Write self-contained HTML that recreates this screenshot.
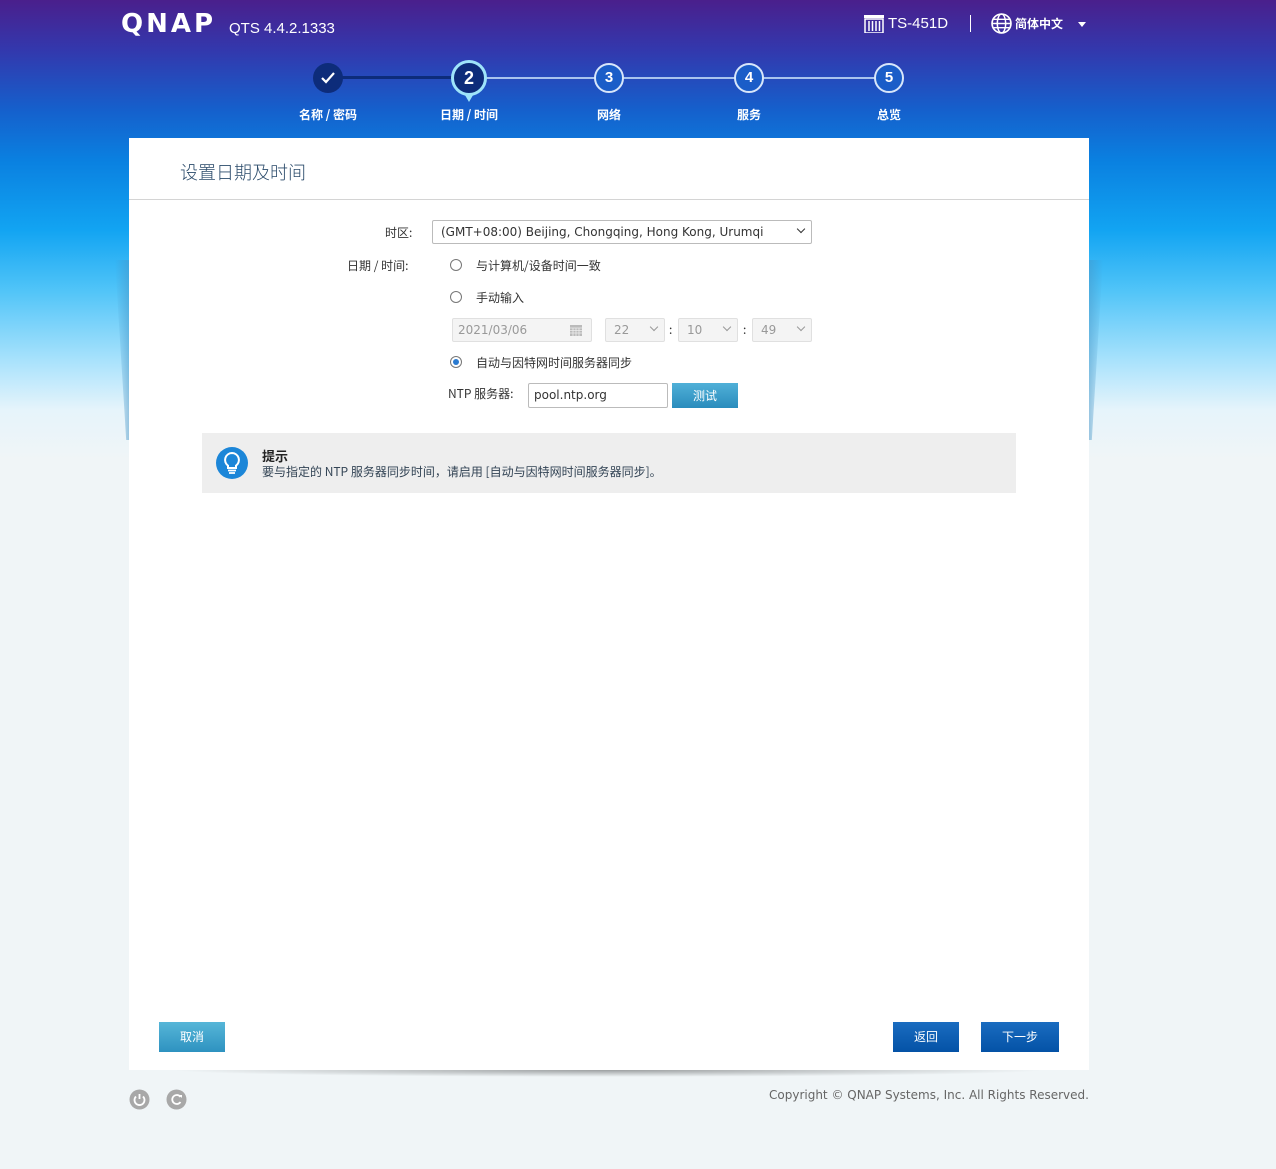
<!DOCTYPE html>
<html><head><meta charset="utf-8">
<style>
*{box-sizing:border-box;margin:0;padding:0}
body{width:1276px;height:1169px;overflow:hidden;position:relative;font-family:"Liberation Sans","Noto Sans CJK SC",sans-serif;
background:linear-gradient(to bottom,#4a1f8c 0px,#3338ad 50px,#1560cc 110px,#0a80e0 160px,#12a4f2 230px,#50c4f8 290px,#a8e2fc 360px,#e6f4fb 410px,#f0f5f7 460px,#f0f5f7 100%);}
.abs{position:absolute}
.card{position:absolute;left:129px;top:138px;width:960px;height:932px;background:#fff}
.hdr{height:62px;border-bottom:1px solid #d4d4d4;padding:21px 0 0 51px;font-size:18px;color:#2a4a6a;font-family:"Noto Sans CJK SC",sans-serif;font-weight:300}
.lbl{position:absolute;font-size:12px;color:#333;font-family:"Noto Sans CJK SC",sans-serif}
.sel{position:absolute;border:1px solid #bbb;border-radius:2px;background:#fff;font-size:12px;color:#333;padding:4px 8px;font-family:"DejaVu Sans",sans-serif}
.dis{background:#f4f4f4;border-color:#e0e0e0;color:#999}
.chev{position:absolute;right:7px;top:5px;width:6px;height:6px;border-right:1.5px solid #333;border-bottom:1.5px solid #333;transform:rotate(45deg)}
.dis .chev{border-color:#999}
.radio{position:absolute;width:12px;height:12px;border:1px solid #777;border-radius:50%;background:#fff}
.step{position:absolute;border-radius:50%;color:#fff;font-weight:bold;font-size:15px;text-align:center}
.slbl{position:absolute;top:106px;font-size:12px;color:#fff;font-weight:bold;transform:translateX(-50%);white-space:nowrap;font-family:"Noto Sans CJK SC",sans-serif}
.btn{position:absolute;height:30px;color:#fff;font-size:12px;text-align:center;line-height:30px;font-family:"Noto Sans CJK SC",sans-serif}
</style></head><body>
<div class="abs" style="left:115px;top:260px;width:14px;height:180px;background:linear-gradient(to right,rgba(255,255,255,0),rgba(70,150,200,.5));clip-path:polygon(0 0,100% 0,100% 100%,80% 100%)"></div>
<div class="abs" style="left:1089px;top:260px;width:14px;height:180px;background:linear-gradient(to left,rgba(255,255,255,0),rgba(70,150,200,.5));clip-path:polygon(0 0,100% 0,20% 100%,0 100%)"></div>

<div class="abs" style="left:121px;top:9px;font-size:26px;font-weight:900;color:#fff;letter-spacing:3px;font-family:'DejaVu Sans',sans-serif">QNAP</div>
<div class="abs" style="left:229px;top:20px;font-size:15px;color:#fff">QTS 4.4.2.1333</div>
<svg class="abs" style="left:864px;top:15px" width="20" height="18"><rect x="0" y="0" width="20" height="3" fill="#fff"/><rect x="1" y="4" width="18" height="14" fill="none" stroke="#fff" stroke-width="1.5"/><path d="M5 6v10M8.5 6v10M12 6v10M15.5 6v10" stroke="#fff" stroke-width="1.5"/></svg>
<div class="abs" style="left:888px;top:15px;font-size:15px;color:#fff">TS-451D</div>
<div class="abs" style="left:970px;top:15px;width:1px;height:17px;background:#fff"></div>
<svg class="abs" style="left:991px;top:13px" width="21" height="21" viewBox="0 0 20 20"><circle cx="10" cy="10" r="9" fill="none" stroke="#fff" stroke-width="1.6"/><ellipse cx="10" cy="10" rx="4" ry="9" fill="none" stroke="#fff" stroke-width="1.4"/><path d="M1 10h18M2.5 6h15M2.5 14h15" stroke="#fff" stroke-width="1.4"/></svg>
<div class="abs" style="left:1015px;top:15px;font-size:12px;color:#fff;font-weight:bold;font-family:'Noto Sans CJK SC',sans-serif">简体中文</div>
<div class="abs" style="left:1078px;top:22px;border-left:4px solid transparent;border-right:4px solid transparent;border-top:5px solid #fff"></div>

<div class="abs" style="left:340px;top:76px;width:120px;height:3px;background:#0d2c7a"></div>
<div class="abs" style="left:480px;top:77px;width:400px;height:2px;background:#a8c4ee"></div>
<div class="step" style="left:313px;top:63px;width:30px;height:30px;background:#0d2c7a;line-height:30px">
<svg width="30" height="30"><path d="M9 15l4 4 8-9" stroke="#fff" stroke-width="2.2" fill="none"/></svg></div>
<div class="abs" style="left:462px;top:90px;border-left:7px solid transparent;border-right:7px solid transparent;border-top:12px solid #9ee4fa"></div>
<div class="step" style="left:451px;top:60px;width:36px;height:36px;background:#0d2c7a;border:3px solid #9ee4fa;line-height:30px;font-size:18px">2</div>
<div class="step" style="left:594px;top:63px;width:30px;height:30px;border:2px solid #d8e6fa;line-height:26px;background:#1a5dc8">3</div>
<div class="step" style="left:734px;top:63px;width:30px;height:30px;border:2px solid #d8e6fa;line-height:26px;background:#1a5dc8">4</div>
<div class="step" style="left:874px;top:63px;width:30px;height:30px;border:2px solid #d8e6fa;line-height:26px;background:#1a5dc8">5</div>
<div class="slbl" style="left:328px">名称 / 密码</div>
<div class="slbl" style="left:469px">日期 / 时间</div>
<div class="slbl" style="left:609px">网络</div>
<div class="slbl" style="left:749px">服务</div>
<div class="slbl" style="left:889px">总览</div>

<div class="card">
<div class="hdr">设置日期及时间</div>
</div>
<div class="lbl" style="left:385px;top:224px">时区:</div>
<div class="sel" style="left:432px;top:220px;width:380px;height:24px">(GMT+08:00) Beijing, Chongqing, Hong Kong, Urumqi<span class="chev"></span></div>
<div class="lbl" style="left:347px;top:257px">日期 / 时间:</div>
<div class="radio" style="left:450px;top:259px"></div>
<div class="lbl" style="left:476px;top:257px">与计算机/设备时间一致</div>
<div class="radio" style="left:450px;top:291px"></div>
<div class="lbl" style="left:476px;top:289px">手动输入</div>
<div class="sel dis" style="left:452px;top:318px;width:140px;height:24px;padding-left:5px">2021/03/06
<svg style="position:absolute;right:9px;top:6px" width="12" height="11"><rect width="12" height="11" fill="#bbb"/><path d="M0 3h12M0 5.5h12M0 8h12M3 3v8M6 3v8M9 3v8" stroke="#eee" stroke-width="0.8"/></svg></div>
<div class="sel dis" style="left:605px;top:318px;width:60px;height:24px">22<span class="chev"></span></div>
<div class="lbl" style="left:669px;top:321px;color:#333">:</div>
<div class="sel dis" style="left:678px;top:318px;width:60px;height:24px">10<span class="chev"></span></div>
<div class="lbl" style="left:743px;top:321px;color:#333">:</div>
<div class="sel dis" style="left:752px;top:318px;width:60px;height:24px">49<span class="chev"></span></div>
<div class="radio" style="left:450px;top:356px"><div style="position:absolute;left:2px;top:2px;width:6px;height:6px;border-radius:50%;background:#2a7ad0"></div></div>
<div class="lbl" style="left:476px;top:354px">自动与因特网时间服务器同步</div>
<div class="lbl" style="left:448px;top:385px">NTP 服务器:</div>
<div class="sel" style="left:528px;top:383px;width:140px;height:25px;padding-left:5px">pool.ntp.org</div>
<div class="btn" style="left:672px;top:383px;width:66px;height:25px;line-height:25px;background:linear-gradient(#50b0d8,#2a8cbc)">测试</div>

<div class="abs" style="left:202px;top:433px;width:814px;height:60px;background:#eeeeee"></div>
<svg class="abs" style="left:215px;top:446px" width="34" height="34" viewBox="0 0 34 34"><circle cx="17" cy="17" r="16" fill="#1c86d8"/><path d="M17 7a7 7 0 0 0-4 12.7V22h8v-2.3A7 7 0 0 0 17 7z" fill="none" stroke="#fff" stroke-width="2"/><path d="M13 24.5h8M14 27h6" stroke="#fff" stroke-width="1.8"/></svg>
<div class="lbl" style="left:262px;top:446px;font-size:13px;font-weight:bold;color:#222">提示</div>
<div class="lbl" style="left:262px;top:463px;color:#345">要与指定的 NTP 服务器同步时间，请启用 [自动与因特网时间服务器同步]。</div>

<div class="btn" style="left:159px;top:1022px;width:66px;background:linear-gradient(#56b6d8,#2e92c0)">取消</div>
<div class="btn" style="left:893px;top:1022px;width:66px;background:linear-gradient(#1a6cc0,#0452a6)">返回</div>
<div class="btn" style="left:981px;top:1022px;width:78px;background:linear-gradient(#1a6cc0,#0452a6)">下一步</div>

<div class="abs" style="left:168px;top:1070px;width:880px;height:7px;background:radial-gradient(ellipse at center top,rgba(0,0,0,.35),rgba(0,0,0,0) 70%)"></div>
<svg class="abs" style="left:129px;top:1089px" width="21" height="21"><circle cx="10.5" cy="10.5" r="10" fill="#a8a8a8"/><path d="M7 7.5a5 5 0 1 0 7 0M10.5 5v5" stroke="#fff" stroke-width="1.8" fill="none"/></svg>
<svg class="abs" style="left:166px;top:1089px" width="21" height="21"><circle cx="10.5" cy="10.5" r="10" fill="#a8a8a8"/><path d="M14.5 8a4.5 4.5 0 1 0 0 5" stroke="#fff" stroke-width="1.8" fill="none"/><path d="M13 6h3v3" fill="#fff"/></svg>
<div class="abs" style="left:769px;top:1088px;font-size:12px;color:#666;font-family:'DejaVu Sans',sans-serif">Copyright © QNAP Systems, Inc. All Rights Reserved.</div>
</body></html>
